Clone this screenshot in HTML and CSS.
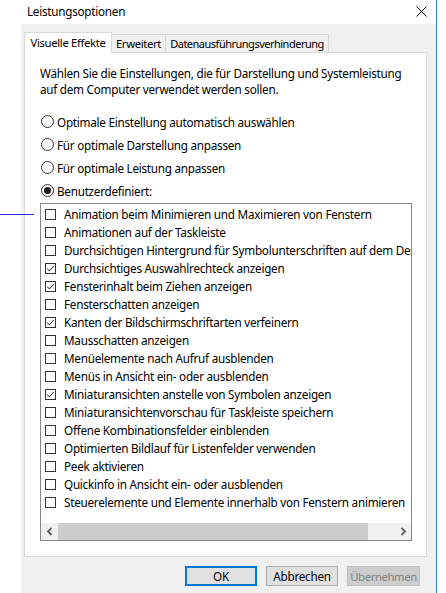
FILE: index.html
```html
<!DOCTYPE html>
<html lang="de">
<head>
<meta charset="utf-8">
<title>Leistungsoptionen</title>
<link rel="stylesheet" href="styles.css">
</head>
<body>
<div class="screen">
  <div class="window">
    <div class="titlebar">
      <span class="title">Leistungsoptionen</span>
      <svg class="close" width="11" height="11" viewBox="0 0 11 11"><path d="M0.5 0.5 L10.5 10.5 M10.5 0.5 L0.5 10.5" stroke="#000" stroke-width="1" fill="none"/></svg>
    </div>
    <div class="frame">
      <div class="gutter"></div>
      <div class="dialog">
        <div class="tabs">
          <div class="tab tab-active tab-visual">Visuelle Effekte</div>
          <div class="tab tab-erw">Erweitert</div>
          <div class="tab tab-dep">Datenausführungsverhinderung</div>
        </div>
        <div class="panel">
          <p class="intro">Wählen Sie die Einstellungen, die für Darstellung und Systemleistung<br>auf dem Computer verwendet werden sollen.</p>
          <div class="radios">
            <div class="radio-row"><span class="radio"></span><span class="label">Optimale Einstellung automatisch auswählen</span></div>
            <div class="radio-row"><span class="radio"></span><span class="label">Für optimale Darstellung anpassen</span></div>
            <div class="radio-row"><span class="radio"></span><span class="label">Für optimale Leistung anpassen</span></div>
            <div class="radio-row"><span class="radio radio-on"></span><span class="label">Benutzerdefiniert:</span></div>
          </div>
          <div class="listbox">
            <div class="items">
              <div class="item"><span class="box"></span><span class="label">Animation beim Minimieren und Maximieren von Fenstern</span></div>
              <div class="item"><span class="box"></span><span class="label">Animationen auf der Taskleiste</span></div>
              <div class="item"><span class="box"></span><span class="label">Durchsichtigen Hintergrund für Symbolunterschriften auf dem Desktop</span></div>
              <div class="item"><span class="box"><svg viewBox="0 0 9 9" width="9" height="9"><path d="M1.2 4.6 L3.4 6.8 L7.8 2.2" stroke="#555" stroke-width="1.1" fill="none"/></svg></span><span class="label">Durchsichtiges Auswahlrechteck anzeigen</span></div>
              <div class="item"><span class="box"><svg viewBox="0 0 9 9" width="9" height="9"><path d="M1.2 4.6 L3.4 6.8 L7.8 2.2" stroke="#555" stroke-width="1.1" fill="none"/></svg></span><span class="label">Fensterinhalt beim Ziehen anzeigen</span></div>
              <div class="item"><span class="box"></span><span class="label">Fensterschatten anzeigen</span></div>
              <div class="item"><span class="box"><svg viewBox="0 0 9 9" width="9" height="9"><path d="M1.2 4.6 L3.4 6.8 L7.8 2.2" stroke="#555" stroke-width="1.1" fill="none"/></svg></span><span class="label">Kanten der Bildschirmschriftarten verfeinern</span></div>
              <div class="item"><span class="box"></span><span class="label">Mausschatten anzeigen</span></div>
              <div class="item"><span class="box"></span><span class="label">Menüelemente nach Aufruf ausblenden</span></div>
              <div class="item"><span class="box"></span><span class="label">Menüs in Ansicht ein- oder ausblenden</span></div>
              <div class="item"><span class="box"><svg viewBox="0 0 9 9" width="9" height="9"><path d="M1.2 4.6 L3.4 6.8 L7.8 2.2" stroke="#555" stroke-width="1.1" fill="none"/></svg></span><span class="label">Miniaturansichten anstelle von Symbolen anzeigen</span></div>
              <div class="item"><span class="box"></span><span class="label">Miniaturansichtenvorschau für Taskleiste speichern</span></div>
              <div class="item"><span class="box"></span><span class="label">Offene Kombinationsfelder einblenden</span></div>
              <div class="item"><span class="box"></span><span class="label">Optimierten Bildlauf für Listenfelder verwenden</span></div>
              <div class="item"><span class="box"></span><span class="label">Peek aktivieren</span></div>
              <div class="item"><span class="box"></span><span class="label">Quickinfo in Ansicht ein- oder ausblenden</span></div>
              <div class="item"><span class="box"></span><span class="label">Steuerelemente und Elemente innerhalb von Fenstern animieren</span></div>
            </div>
            <div class="hscroll">
              <div class="sbtn"><svg width="8" height="9" viewBox="0 0 8 9"><path d="M5.5 1 L2 4.5 L5.5 8" stroke="#606060" stroke-width="1.8" fill="none"/></svg></div>
              <div class="thumb"></div>
              <div class="track"></div>
              <div class="sbtn"><svg width="8" height="9" viewBox="0 0 8 9"><path d="M2.5 1 L6 4.5 L2.5 8" stroke="#606060" stroke-width="1.8" fill="none"/></svg></div>
            </div>
          </div>
        </div>
        <div class="buttons">
          <div class="btn btn-default">OK</div>
          <div class="btn">Abbrechen</div>
          <div class="btn btn-disabled">Übernehmen</div>
        </div>
      </div>
    </div>
  </div>
  <div class="edge"></div>
  <div class="rest"></div>
</div>
<div class="annot"></div>
</body>
</html>
```
FILE: styles.css
```css
* { box-sizing: border-box; }
html, body { margin: 0; padding: 0; background: #fff; }
body {
  font-family: "Noto Sans", "Open Sans", sans-serif;
  font-size: 11.7px;
  letter-spacing: -0.25px;
  color: #000;
  width: 446px;
  height: 593px;
  overflow: hidden;
  position: relative;
}
.screen { display: flex; width: 446px; height: 593px; }
.window { width: 436px; display: flex; flex-direction: column; }
.edge { width: 1px; background: #2b88d8; }
.rest { flex: 1; background: #fff; }

.titlebar {
  height: 24px;
  display: flex;
  align-items: center;
  justify-content: space-between;
  padding: 0 9px 3px 27px;
  background: #fff;
}
.close { display: block; margin-top: 1px; }

.frame { flex: 1; display: flex; }
.gutter { width: 22px; background: #fff; }
.dialog {
  flex: 1;
  background: #f0f0f0;
  padding: 8px 9px 0 3px;
  display: flex;
  flex-direction: column;
}

.tabs { display: flex; align-items: flex-end; height: 20px; }
.tab {
  height: 18px;
  border: 1px solid #d9d9d9;
  border-bottom: none;
  background: #f0f0f0;
  display: flex;
  align-items: center;
  justify-content: center;
  white-space: nowrap;
  line-height: 16px;
  font-size: 11.3px;
  letter-spacing: -0.35px;
}
.tab-active {
  height: 21px;
  margin-bottom: -1px;
  background: #fff;
  position: relative;
  z-index: 1;
  padding-bottom: 1px;
}
.tab-visual { width: 88px; }
.tab-erw { width: 55px; margin-left: -1px; }
.tab-dep { width: 164px; margin-left: -1px; font-size: 11px; letter-spacing: -0.5px; }

.panel {
  height: 505px;
  width: 403px;
  border: 1px solid #d9d9d9;
  background: #fff;
  padding: 12px 13px 0 15px;
}
.intro { margin: 0; line-height: 16px; white-space: nowrap; }

.radios { margin-top: 13px; }
.radio-row { height: 23px; display: flex; align-items: center; }
.radio {
  width: 13px;
  height: 13px;
  margin-left: 1px;
  border: 1px solid #333;
  border-radius: 50%;
  display: flex;
  align-items: center;
  justify-content: center;
  flex: none;
}
.radio-on::after {
  content: "";
  width: 7px;
  height: 7px;
  border-radius: 50%;
  background: #1a1a1a;
}
.radio-row .label { margin-left: 3px; white-space: nowrap; }

.listbox {
  margin-top: 1px;
  width: 372px;
  height: 338px;
  border: 1px solid #828790;
  background: #fff;
  display: flex;
  flex-direction: column;
  overflow: hidden;
}
.items { flex: 1; padding-top: 1px; overflow: hidden; }
.item {
  height: 18px;
  display: flex;
  align-items: center;
  padding-left: 4px;
  white-space: nowrap;
}
.box {
  width: 11px;
  height: 11px;
  border: 1px solid #333;
  flex: none;
  display: flex;
  align-items: center;
  justify-content: center;
  background: #fff;
}
.box svg { display: block; }
.item .label { margin-left: 8px; }

.hscroll { height: 17px; display: flex; background: #f0f0f0; flex: none; }
.sbtn { width: 17px; display: flex; align-items: center; justify-content: center; }
.thumb { width: 310px; background: #cdcdcd; }
.track { flex: 1; }

.buttons {
  margin-top: 9px;
  display: flex;
  justify-content: flex-end;
  gap: 9px;
  padding-right: 7px;
}
.btn {
  width: 72px;
  height: 20px;
  border: 1px solid #adadad;
  background: #e1e1e1;
  display: flex;
  align-items: center;
  justify-content: center;
  white-space: nowrap;
}
.btn-default { border: 2px solid #0078d7; }
.btn-disabled {
  background: #cccccc;
  border-color: #bfbfbf;
  color: #838383;
  width: 73px;
  font-size: 11.3px;
  letter-spacing: -0.4px;
}

.annot {
  position: absolute;
  left: 0;
  top: 214px;
  width: 34px;
  height: 1px;
  background: #2a2acc;
}
```
